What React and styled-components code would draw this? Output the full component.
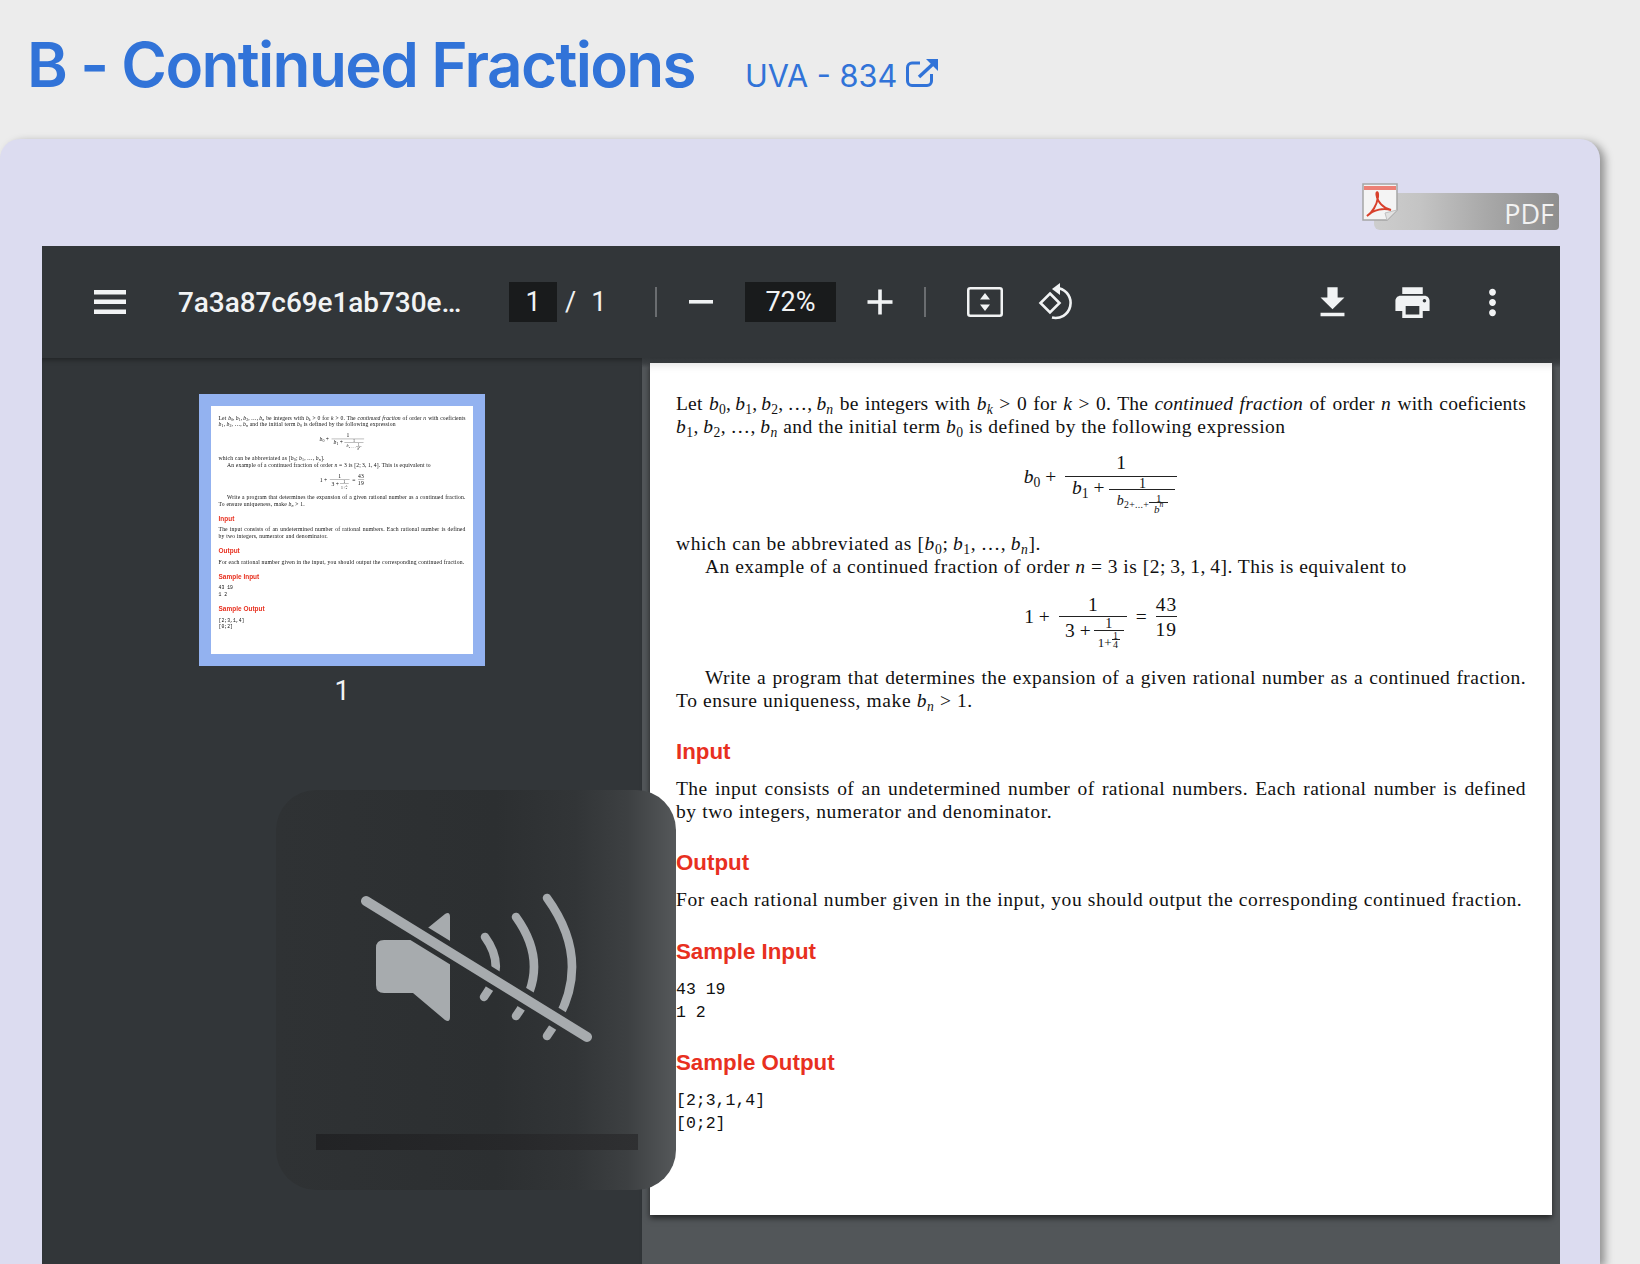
import React from 'react';
import styled, { createGlobalStyle } from 'styled-components';

const GlobalStyle = createGlobalStyle`
  html, body {
    margin: 0;
    padding: 0;
    height: 1264px;
    overflow: hidden;
    background: #ececec;
  }
  * { box-sizing: border-box; }
`;

const Screen = styled.div`
  width: 1640px;
  height: 1264px;
  overflow: hidden;
  background: #ececec;
  font-family: Inter, "Liberation Sans", sans-serif;
`;

const Header = styled.header`
  height: 139px;
  padding: 27px 0 0 27px;
  display: flex;
  align-items: baseline;
  color: #3173d8;
`;

const Title = styled.h1`
  margin: 0;
  font-size: 62px;
  line-height: 75px;
  font-weight: 600;
  letter-spacing: -1.65px;
`;

const Source = styled.a`
  margin-left: 50px;
  display: inline-flex;
  align-items: baseline;
  gap: 9px;
  font-size: 30.7px;
  font-weight: 400;
`;

const Card = styled.section`
  width: 1600px;
  height: 1125px;
  margin-left: 0;
  padding: 0 40px 0 42px;
  background: #dcdcf0;
  border-radius: 20px 20px 0 0;
  box-shadow: 5px 3px 8px rgba(0, 0, 0, 0.38);
`;

const BadgeRow = styled.div`
  height: 107px;
  padding: 54px 1px 0 0;
  display: flex;
  justify-content: flex-end;
`;

const PdfBadge = styled.div`
  position: relative;
  width: 185px;
  height: 37px;
  padding-right: 5px;
  border-radius: 3px 4px 4px 6px;
  background: linear-gradient(90deg, #cdcdcd 0%, #c4c4c4 25%, #a9a9a9 60%, #8e8e8e 100%);
  color: #f2f2f2;
  font: 400 27px/42px "Open Sans", sans-serif;
  text-align: right;
`;

const PdfGlyph = styled.svg`
  position: absolute;
  left: -12px;
  top: -10px;
  filter: blur(0.5px);
`;

const Viewer = styled.div`
  position: relative;
  width: 1518px;
  height: 1018px;
  overflow: hidden;
  background: #323639;
  font-family: Roboto, sans-serif;
`;

const Toolbar = styled.div`
  height: 112px;
  padding: 0 47px 0 52px;
  display: flex;
  align-items: center;
  background: #323639;
  color: #f1f3f4;
`;

const ToolIcon = styled.svg`
  flex: none;
  margin-left: ${(p) => p.$ml || 0}px;
  fill: ${(p) => (p.$line ? 'none' : '#f1f3f4')};
  stroke: ${(p) => (p.$line ? '#f1f3f4' : 'none')};
`;

const FileName = styled.div`
  width: 290px;
  margin-left: 52px;
  flex: none;
  font-size: 28px;
  font-weight: 500;
  letter-spacing: -0.08px;
  white-space: nowrap;
`;

const InputBox = styled.div`
  width: ${(p) => p.$w}px;
  height: 40px;
  margin-left: ${(p) => p.$ml}px;
  flex: none;
  background: #191b1c;
  font-size: 27px;
  line-height: 40px;
  text-align: center;
`;

const PageTotal = styled.div`
  margin-left: 8px;
  width: 90px;
  flex: none;
  font-size: 27px;
  display: flex;
  gap: 15px;
`;

const Separator = styled.div`
  width: 2px;
  height: 30px;
  margin-left: ${(p) => p.$ml}px;
  flex: none;
  background: #6a6d70;
`;

const RightTools = styled.div`
  margin-left: auto;
  display: flex;
  gap: 39px;
`;

const Columns = styled.div`
  display: flex;
  height: 906px;
`;

const Sidebar = styled.aside`
  width: 600px;
  flex: none;
  padding-top: 36px;
  display: flex;
  flex-direction: column;
  align-items: center;
  background: #323639;
  box-shadow: inset 0 5px 5px -3px rgba(0, 0, 0, 0.35);
  color: #f1f3f4;
`;

const Thumb = styled.div`
  width: 286px;
  height: 272px;
  padding: 12px;
  flex: none;
  background: #93b2f0;
`;

const ThumbPaper = styled.div`
  width: 262px;
  height: 248px;
  overflow: hidden;
  background: #fff;
`;

const ThumbScale = styled.div`
  width: 902px;
  height: 852px;
  transform: scale(0.2905);
  transform-origin: 0 0;
  filter: blur(0.9px);
`;

const ThumbLabel = styled.div`
  margin-top: 10px;
  font-size: 27px;
  line-height: 30px;
`;

const Main = styled.main`
  flex: 1;
  padding: 5px 8px 0;
  background: linear-gradient(180deg, #323639 0, #3b3f42 5px, #525659 10px);
`;

const Paper = styled.div`
  width: 902px;
  height: 852px;
  background: #fff;
  box-shadow: inset 0 10px 8px -8px rgba(0, 0, 0, 0.12), 0 3px 6px rgba(0, 0, 0, 0.6);
`;

const PageBody = styled.div`
  width: 902px;
  padding: 29px 26px 0;
  color: #111;
  font-family: "Liberation Serif", serif;
  font-size: 19.5px;
  line-height: 23px;
`;

const Line = styled.div`
  white-space: nowrap;
  padding-left: ${(p) => (p.$indent ? 29 : 0)}px;
  letter-spacing: ${(p) => p.$track || 0}px;
  ${(p) => p.$fit && `
    white-space: normal;
    text-align: justify;
    text-align-last: justify;
  `}
`;

const Var = styled.i`
  font-style: italic;
`;

const Sub = styled.span`
  font-size: 0.7em;
  position: relative;
  top: 0.28em;
  line-height: 0;
`;

const Equation = styled.div`
  height: ${(p) => p.$h}px;
  padding-top: ${(p) => p.$top}px;
  display: flex;
  justify-content: center;
  align-items: flex-start;
  transform: translateX(${(p) => p.$shift || 0}px);
`;

const Term = styled.span`
  margin-top: ${(p) => p.$top || 0}px;
  padding: 0 ${(p) => p.$pad || 0}px;
  line-height: ${(p) => p.$lh || 24}px;
  font-size: ${(p) => p.$size || 19.5}px;
  letter-spacing: ${(p) => p.$track || 0}px;
  white-space: pre;
`;

const Frac = styled.span`
  display: inline-flex;
  flex-direction: column;
  align-items: center;
  width: ${(p) => p.$w}px;
  flex: none;
  font-size: ${(p) => p.$size || 19.5}px;
  letter-spacing: ${(p) => p.$track || 0}px;
`;

const Num = styled.span`
  width: 100%;
  height: ${(p) => p.$h || 25}px;
  line-height: ${(p) => p.$lh || p.$h || 25}px;
  text-align: center;
  border-bottom: 1px solid #222;
`;

const Den = styled.span`
  display: flex;
  justify-content: center;
  padding-top: ${(p) => p.$pt || 0}px;
  line-height: ${(p) => p.$lh || 24}px;
  white-space: nowrap;
`;

const Heading = styled.h3`
  margin: ${(p) => p.$top}px 0 ${(p) => p.$bottom}px;
  color: #e8301f;
  font-family: "Liberation Sans", sans-serif;
  font-size: 22.3px;
  line-height: 30px;
  font-weight: 700;
`;

const Mono = styled.pre`
  margin: 0;
  font-family: "Liberation Mono", monospace;
  font-size: 16.5px;
  line-height: 23px;
  color: #111;
`;

const Volume = styled.div`
  position: absolute;
  left: 234px;
  top: 544px;
  width: 400px;
  height: 400px;
  border-radius: 40px;
  background: linear-gradient(90deg, #2f3234 0%, #2c2f31 55%, #323537 75%, #3d4042 88%, #55585a 100%);
`;

const VolumeIcon = styled.svg`
  display: block;
`;

const VolumeBar = styled.div`
  width: 322px;
  height: 16px;
  margin-left: 40px;
  background: linear-gradient(90deg, #222325 0%, #27282a 60%, #2f3032 100%);
`;

const B = ({ sub }) => (
  <>
    <Var>b</Var>
    <Sub>{sub}</Sub>
  </>
);

function PageContent() {
  return (
    <PageBody>
      <Line $fit $track={0.2}>
        Let <B sub="0" />,&#8201;<B sub="1" />,&#8201;<B sub="2" />,&#8201;…,&#8201;<B sub={<Var>n</Var>} /> be integers with <B sub={<Var>k</Var>} /> &gt; 0 for <Var>k</Var> &gt; 0. The <Var>continued fraction</Var> of order <Var>n</Var> with coeficients
      </Line>
      <Line $track={0.48}>
        <B sub="1" />,&#8201;<B sub="2" />,&#8201;…,&#8201;<B sub={<Var>n</Var>} /> and the initial term <B sub="0" /> is defined by the following expression
      </Line>

      <Equation $h={94} $top={12} $shift={-5}>
        <Term $top={15} $pad={9}><B sub="0" /> +</Term>
        <Frac $w={112}>
          <Num $h={27} $lh={25}>1</Num>
          <Den>
            <Term $top={-1} $pad={5}><B sub="1" /> +</Term>
            <Frac $w={66} $size={14}>
              <Num $h={13}>1</Num>
              <Den $pt={3} $lh={13}>
                <Term $size={14} $lh={16} $track={0.3}><B sub="2+...+" /></Term>
                <Frac $w={19} $size={11}>
                  <Num $h={10}>1</Num>
                  <Den $lh={13}><B sub={<Var>n</Var>} /></Den>
                </Frac>
              </Den>
            </Frac>
          </Den>
        </Frac>
      </Equation>

      <Line $track={0.6}>
        which can be abbreviated as [<B sub="0" />;&#8201;<B sub="1" />,&#8201;…,&#8201;<B sub={<Var>n</Var>} />].
      </Line>
      <Line $indent $track={0.49}>
        An example of a continued fraction of order <Var>n</Var> = 3 is [2;&#8201;3,&#8201;1,&#8201;4]. This is equivalent to
      </Line>

      <Equation $h={88} $top={14} $shift={-5}>
        <Term $top={13} $pad={9}>1 +</Term>
        <Frac $w={68}>
          <Num>1</Num>
          <Den>
            <Term $top={2} $pad={3}>3 +</Term>
            <Frac $w={30} $size={14}>
              <Num $h={14}>1</Num>
              <Den $lh={18}>
                <Term $size={13}>1+</Term>
                <Frac $w={8} $size={10}>
                  <Num $h={9}>1</Num>
                  <Den $lh={10}>4</Den>
                </Frac>
              </Den>
            </Frac>
          </Den>
        </Frac>
        <Term $top={13} $pad={9}>=</Term>
        <Frac $w={21} $track={1}>
          <Num>43</Num>
          <Den $lh={26}>19</Den>
        </Frac>
      </Equation>

      <Line $indent $fit $track={0.45}>
        Write a program that determines the expansion of a given rational number as a continued fraction.
      </Line>
      <Line $track={0.6}>
        To ensure uniqueness, make <B sub={<Var>n</Var>} /> &gt; 1.
      </Line>

      <Heading $top={25} $bottom={10}>Input</Heading>
      <Line $fit $track={0.45}>
        The input consists of an undetermined number of rational numbers. Each rational number is defined
      </Line>
      <Line $track={0.6}>by two integers, numerator and denominator.</Line>

      <Heading $top={25} $bottom={10}>Output</Heading>
      <Line $track={0.6}>
        For each rational number given in the input, you should output the corresponding continued fraction.
      </Line>

      <Heading $top={26} $bottom={11}>Sample Input</Heading>
      <Mono>{'43 19\n1 2'}</Mono>

      <Heading $top={24} $bottom={11}>Sample Output</Heading>
      <Mono>{'[2;3,1,4]\n[0;2]'}</Mono>
    </PageBody>
  );
}

export default function App() {
  return (
    <Screen>
      <GlobalStyle />
      <Header>
        <Title>B - Continued Fractions</Title>
        <Source>
          UVA - 834
          <svg width="32" height="28" viewBox="0 0 32 28" fill="none">
            <path d="M14 4H6A4.5 4.5 0 0 0 1.5 8.5V22A4.5 4.5 0 0 0 6 26.5H21A4.5 4.5 0 0 0 25.5 22V15" stroke="#3173d8" strokeWidth="3" />
            <path d="M13 18L27 5" stroke="#3173d8" strokeWidth="3.5" />
            <path d="M20 0H32V12Z" fill="#3173d8" />
          </svg>
        </Source>
      </Header>

      <Card>
        <BadgeRow>
          <PdfBadge>
            <PdfGlyph width="36" height="38" viewBox="0 0 36 38">
              <path d="M1 1H35V27L25 37H1Z" fill="#f4f4f4" stroke="#a5a5a5" strokeWidth="1.5" />
              <path d="M25 37L23 30L35 27" fill="#e2e2e2" stroke="#c0c0c0" />
              <rect x="2" y="3" width="32" height="4" fill="#ec8076" />
              <path d="M5 33C10 30 15 22 16 14C16.5 8 14 8 14.5 12C15.5 19 21 25 29 27C22 25 12 26 5 33Z" fill="none" stroke="#d8402c" strokeWidth="2" />
            </PdfGlyph>
            PDF
          </PdfBadge>
        </BadgeRow>

        <Viewer>
          <Toolbar>
            <ToolIcon width="32" height="24" viewBox="0 0 32 24">
              <rect y="0" width="32" height="4.5" />
              <rect y="9.5" width="32" height="4.5" />
              <rect y="19.5" width="32" height="4.5" />
            </ToolIcon>
            <FileName>7a3a87c69e1ab730e…</FileName>
            <InputBox $w={48} $ml={41}>1</InputBox>
            <PageTotal>
              <span>/</span>
              <span>1</span>
            </PageTotal>
            <Separator $ml={0} />
            <ToolIcon $ml={31} width="26" height="26" viewBox="0 0 26 26">
              <rect x="1" y="11" width="24" height="3.6" />
            </ToolIcon>
            <InputBox $w={91} $ml={31}>72%</InputBox>
            <ToolIcon $ml={31} width="26" height="26" viewBox="0 0 26 26">
              <rect x="0.5" y="11.2" width="25" height="3.6" />
              <rect x="11.2" y="0.5" width="3.6" height="25" />
            </ToolIcon>
            <Separator $ml={31} />
            <ToolIcon $ml={41} $line width="36" height="30" viewBox="0 0 36 30">
              <rect x="1.25" y="1.25" width="33.5" height="27.5" rx="2" strokeWidth="2.5" />
              <path d="M18 6L23 12.5H13ZM18 24L13 17.5H23Z" fill="#f1f3f4" stroke="none" />
            </ToolIcon>
            <ToolIcon $ml={32} $line width="44" height="44" viewBox="0 -1 44 44">
              <path d="M15 12.5L24.5 22L15 31.5L5.5 22Z" strokeWidth="2.6" />
              <path d="M24 7.2A15 15 0 1 1 17 36.6" strokeWidth="2.6" />
              <path d="M17 8L25 2V14Z" fill="#f1f3f4" stroke="none" />
            </ToolIcon>
            <RightTools>
              <ToolIcon width="41" height="41" viewBox="0 0 24 24">
                <path d="M19 9h-4V3H9v6H5l7 7 7-7zM5 18v2h14v-2H5z" />
              </ToolIcon>
              <ToolIcon width="41" height="41" viewBox="0 0 24 24">
                <path d="M19 8H5c-1.66 0-3 1.34-3 3v6h4v4h12v-4h4v-6c0-1.66-1.34-3-3-3zm-3 11H8v-5h8v5zm3-7c-.55 0-1-.45-1-1s.45-1 1-1 1 .45 1 1-.45 1-1 1zm-1-9H6v4h12V3z" />
              </ToolIcon>
              <ToolIcon width="41" height="41" viewBox="0 0 24 24">
                <path d="M12 8c1.1 0 2-.9 2-2s-.9-2-2-2-2 .9-2 2 .9 2 2 2zm0 2c-1.1 0-2 .9-2 2s.9 2 2 2 2-.9 2-2-.9-2-2-2zm0 6c-1.1 0-2 .9-2 2s.9 2 2 2 2-.9 2-2-.9-2-2-2z" />
              </ToolIcon>
            </RightTools>
          </Toolbar>

          <Columns>
            <Sidebar>
              <Thumb>
                <ThumbPaper>
                  <ThumbScale>
                    <PageContent />
                  </ThumbScale>
                </ThumbPaper>
              </Thumb>
              <ThumbLabel>1</ThumbLabel>
            </Sidebar>
            <Main>
              <Paper>
                <PageContent />
              </Paper>
            </Main>
          </Columns>

          <Volume>
            <VolumeIcon width="400" height="344" viewBox="0 0 400 344">
              <defs>
                <mask id="slash-gap" maskUnits="userSpaceOnUse" x="0" y="0" width="400" height="344">
                  <rect width="400" height="344" fill="#fff" />
                  <path d="M90 111L311 247" stroke="#000" strokeWidth="20" />
                </mask>
              </defs>
              <g mask="url(#slash-gap)" fill="#a7abae">
                <path d="M108 150H137L169 124Q174 121 174 127V227Q174 233 169 230L137 203H108Q100 203 100 195V158Q100 150 108 150Z" />
                <g fill="none" stroke="#a7abae" strokeWidth="8.5" strokeLinecap="round">
                  <path d="M209 147Q231 177 208 207" />
                  <path d="M240 127Q276 177 240 226" />
                  <path d="M271 108Q321 177 271 246" />
                </g>
              </g>
              <path d="M90 111L311 247" stroke="#a7abae" strokeWidth="10" strokeLinecap="round" />
            </VolumeIcon>
            <VolumeBar />
          </Volume>
        </Viewer>
      </Card>
    </Screen>
  );
}
